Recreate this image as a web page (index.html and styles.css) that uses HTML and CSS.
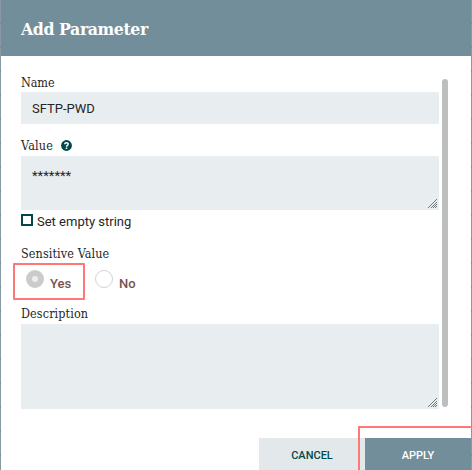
FILE: index.html
```html
<!DOCTYPE html>
<html lang="en">
<head>
<meta charset="utf-8">
<title>Add Parameter</title>
<link rel="stylesheet" href="styles.css">
</head>
<body>
<main class="dialog">
  <header class="dialog-header"><h1>Add Parameter</h1></header>
  <div class="dialog-body">
    <form class="form">
      <div class="label name-label">Name</div>
      <div class="field name-field">SFTP-PWD</div>
      <div class="label value-label"><span class="value-text">Value</span>
        <svg class="help" viewBox="0 0 11 11"><circle cx="5.5" cy="5.5" r="5.4"/><path d="M3.7 4.2C3.8 2.1 7.3 2.2 7.2 4.2C7.1 5.4 5.5 5.2 5.5 6.7M5.5 7.5V9"/></svg>
      </div>
      <div class="field value-field">*******<svg class="grip" viewBox="0 0 11 11"><path d="M1 10 10 1M4 10 10 4M6 10 10 6M8 10 10 8"/></svg></div>
      <div class="check-row"><span class="checkbox"></span><span class="check-text">Set empty string</span></div>
      <div class="label sensitive-label">Sensitive Value</div>
      <div class="radio-row">
        <div class="option highlighted"><span class="radio selected"></span><span class="option-text">Yes</span></div>
        <div class="option"><span class="radio"></span><span class="option-text">No</span></div>
      </div>
      <div class="label description-label">Description</div>
      <div class="field description-field"><svg class="grip" viewBox="0 0 11 11"><path d="M1 10 10 1M4 10 10 4M6 10 10 6M8 10 10 8"/></svg></div>
    </form>
    <div class="scrollbar"></div>
  </div>
  <footer class="actions">
    <div class="button cancel">CANCEL</div>
    <div class="button apply">APPLY</div>
    <div class="apply-highlight"></div>
  </footer>
</main>
</body>
</html>
```
FILE: styles.css
```css
* { box-sizing: border-box; }
body {
  margin: 0;
  height: 470px;
  overflow: hidden;
  padding: 0 1px;
  background: repeating-linear-gradient(#8799a3 0 23px, #728791 23px 24px);
  font-family: Roboto, "Liberation Sans", sans-serif;
  font-size: 13px;
  color: #262626;
}
.dialog { height: 470px; display: flex; flex-direction: column; background: #fff; }
.dialog-header { height: 56px; background: #728e9b; padding: 17px 20px 0; }
h1 {
  margin: 0;
  font: bold 17.5px/24px "Roboto Slab", "DejaVu Serif Condensed", "DejaVu Serif", serif;
  letter-spacing: -0.4px;
  color: #fff;
}
.dialog-body { display: flex; height: 382px; padding: 18px 23px 0 20px; }
.form { width: 418px; }
.label {
  font: 12.5px/18px "Roboto Slab", "DejaVu Serif Condensed", "DejaVu Serif", serif;
  letter-spacing: 0.1px;
  white-space: nowrap;
}
.name-label { letter-spacing: -0.1px; }
.field { position: relative; background: #e8edf0; padding-left: 11px; }
.name-field { height: 32px; line-height: 34px; }
.value-label { display: flex; gap: 8px; height: 18px; margin-top: 14px; }
.value-text { width: 32px; line-height: 16px; letter-spacing: 0.2px; }
.help { width: 11px; height: 11px; margin-top: 2px; }
.help circle { fill: #004849; }
.help path { fill: none; stroke: #fff; stroke-width: 1.5; }
.value-field { height: 54px; padding-top: 11px; line-height: 18px; }
.grip { position: absolute; right: 1px; bottom: 1px; width: 11px; height: 11px; }
.grip path { fill: none; stroke: #777; stroke-width: 1; }
.check-row { display: flex; height: 21px; padding-top: 4px; }
.checkbox { width: 12px; height: 12px; border: 2px solid #004849; margin-right: 4px; }
.check-text { line-height: 16px; }
.sensitive-label { margin-top: 14px; height: 18px; }
.radio-row { display: flex; height: 36px; margin-left: -8px; }
.option { display: flex; width: 70px; height: 36px; padding: 7px 0 0 10px; }
.highlighted { width: 72px; height: 37px; padding: 4px 0 0 10px; border: 2px solid #ff7777; border-radius: 1px; }
.radio { width: 18px; height: 18px; border: 1px solid #d0d4d8; border-radius: 50%; }
.radio.selected { border: 6px solid #cbcbcb; background: #eee; margin: 1px 0 0 1px; }
.option-text { margin: 6px 0 0 6px; font-weight: 500; line-height: 16px; color: #775351; }
.highlighted .option-text { margin-top: 7px; }
.description-label { margin-top: 7px; line-height: 16px; height: 18px; }
.description-field { height: 85px; }
.scrollbar { width: 6px; height: 328px; margin: 5px 0 0 3px; border-radius: 3px; background: #bdbfbe; }
.actions { position: relative; display: flex; justify-content: flex-end; height: 32px; }
.button { width: 106px; height: 32px; line-height: 35px; text-align: center; font-size: 11px; font-weight: 500; }
.cancel { background: #e3e8eb; color: #004849; }
.apply { background: #728e9b; color: #fff; }
.apply-highlight { position: absolute; right: -3px; top: -12px; width: 116px; height: 60px; border: 2px solid #ff7777; }
```
